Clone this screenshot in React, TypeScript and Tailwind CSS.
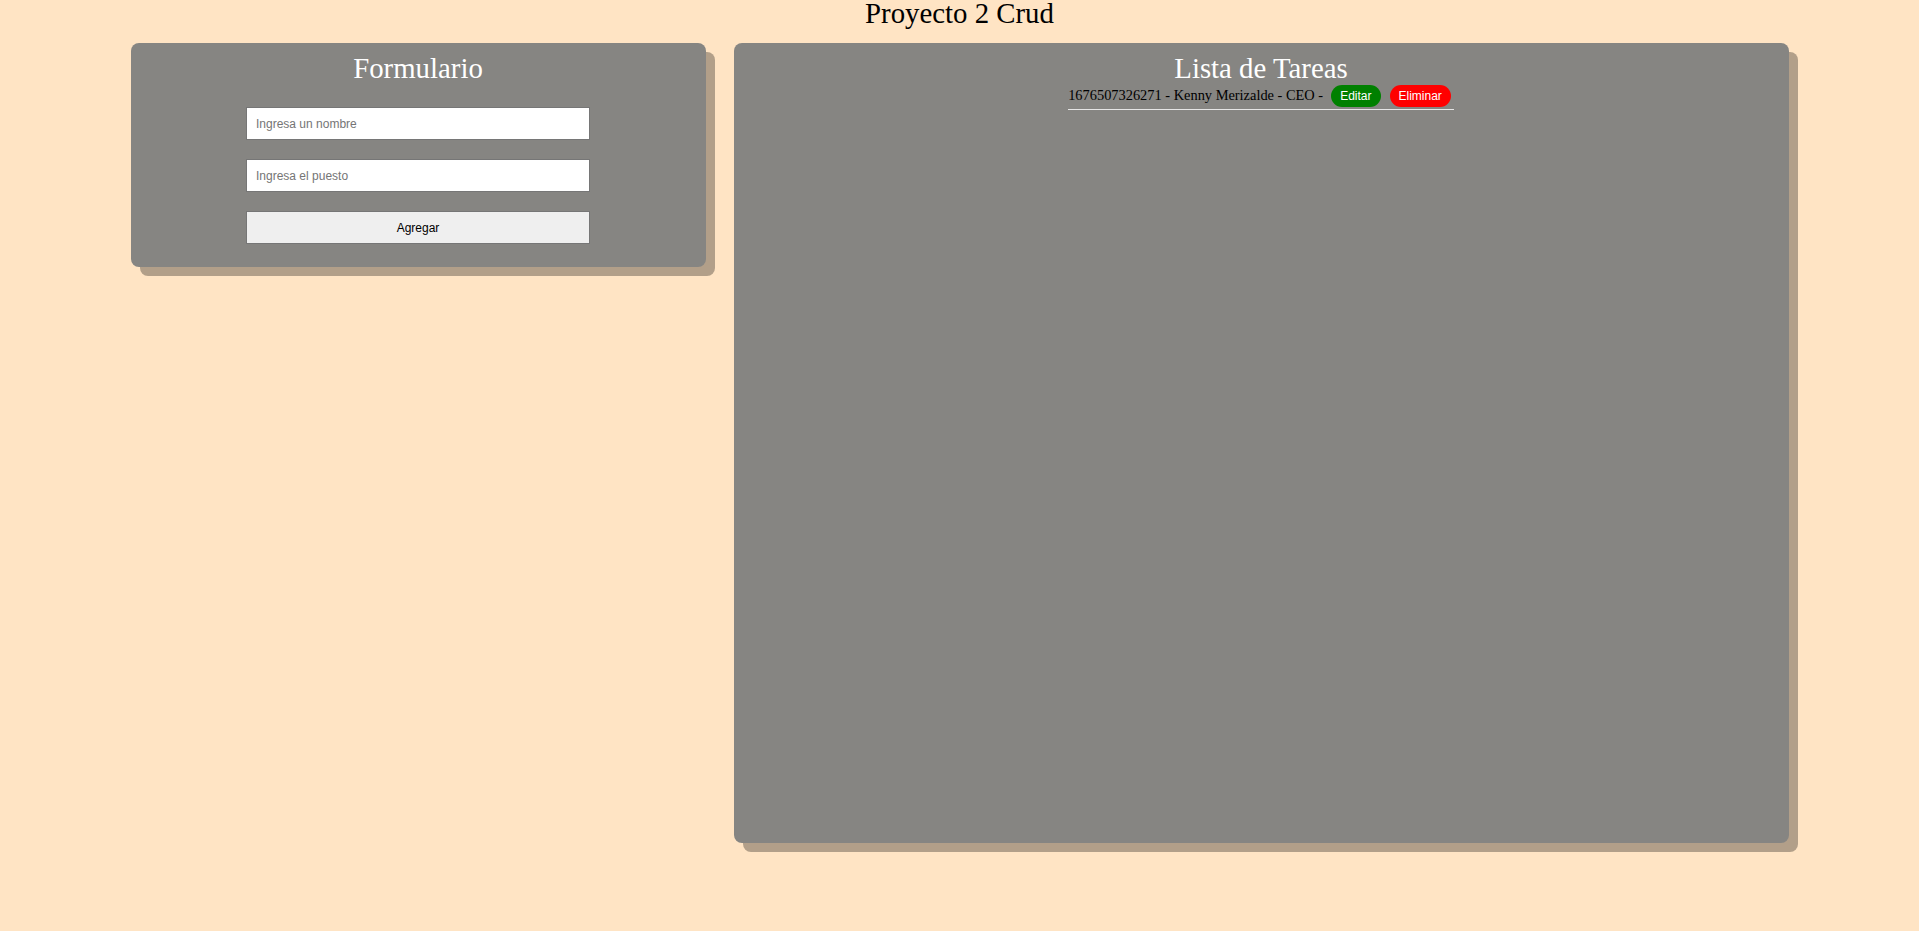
import React from "react";

export default function App() {
  return (
    <div className="min-h-[931px] w-full bg-[#ffe4c4] font-['Liberation_Serif',serif]">
      <h1 className="text-center text-[28.8px] leading-[26px] font-normal text-black">Proyecto 2 Crud</h1>
      <div className="flex justify-center gap-[28px] pt-[17px]">
        <div className="w-[575px] h-[224px] rounded-[8px] bg-[#868582] shadow-[9px_9px_0_rgba(0,0,0,0.3)] pt-[9px] flex flex-col items-center">
          <h2 className="text-[28.8px] leading-[32px] font-normal text-white mb-[23px]">Formulario</h2>
          <div className="flex flex-col gap-[19px] font-['Liberation_Sans',Arial,sans-serif]">
            <input
              type="text"
              placeholder="Ingresa un nombre"
              className="w-[344px] h-[33px] bg-white border border-[#767676] px-[9px] text-[12px] text-black placeholder:text-[#757575] outline-none"
            />
            <input
              type="text"
              placeholder="Ingresa el puesto"
              className="w-[344px] h-[33px] bg-white border border-[#767676] px-[9px] text-[12px] text-black placeholder:text-[#757575] outline-none"
            />
            <button className="w-[344px] h-[33px] bg-[#efefef] border border-[#767676] text-[12px] text-black">
              Agregar
            </button>
          </div>
        </div>
        <div className="w-[1055px] h-[800px] rounded-[8px] bg-[#868582] shadow-[9px_9px_0_rgba(0,0,0,0.3)] pt-[9px] flex flex-col items-center">
          <h2 className="text-[28.8px] leading-[32px] font-normal text-white">Lista de Tareas</h2>
          <ul className="mt-[1px]">
            <li className="flex items-center gap-[8px] border-b border-[#e6e6e6] pb-[2px] pr-[3px] text-[14.4px] text-black">
              <span>1676507326271 - Kenny Merizalde - CEO -</span>
              <span className="flex items-center gap-[9px] font-['Liberation_Sans',Arial,sans-serif]">
                <button className="h-[22px] px-[9px] rounded-full bg-[#008000] text-white text-[12px] leading-none">
                  Editar
                </button>
                <button className="h-[22px] px-[9px] rounded-full bg-[#ff0000] text-white text-[12px] leading-none">
                  Eliminar
                </button>
              </span>
            </li>
          </ul>
        </div>
      </div>
    </div>
  );
}
